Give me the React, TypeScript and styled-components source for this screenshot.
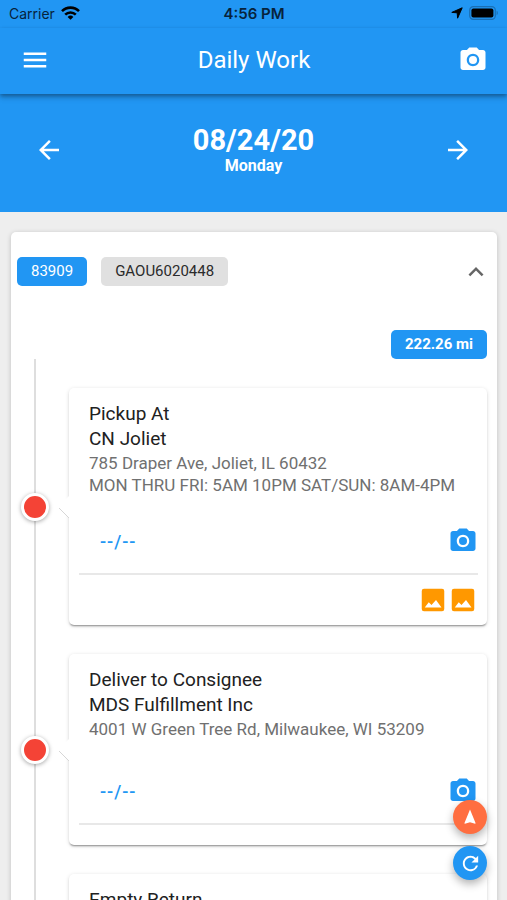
import React from "react";
import styled, { createGlobalStyle } from "styled-components";
import {
  MdArrowBack,
  MdArrowForward,
  MdExpandLess,
  MdMenu,
  MdPhotoCamera,
  MdRefresh,
} from "react-icons/md";

const BLUE = "#2196f3";

const GlobalStyle = createGlobalStyle`
  *, *::before, *::after { box-sizing: border-box; }
  body { margin: 0; background: #eeeeee; font-family: Roboto, sans-serif; }
  button { font: inherit; }
  h1, h2, p, ol { margin: 0; padding: 0; }
`;

const Screen = styled.div`
  display: flex;
  flex-direction: column;
  height: 100vh;
  overflow: hidden;
`;

const StatusBar = styled.div`
  display: grid;
  grid-template-columns: 1fr auto 1fr;
  align-items: center;
  height: 28px;
  padding: 0 8px 2px 9px;
  background: ${BLUE};
  color: #07233c;
  font-family: Inter, sans-serif;
  font-size: 14px;
`;

const StatusGroup = styled.div<{ $end?: boolean }>`
  display: flex;
  align-items: center;
  justify-content: ${(p) => (p.$end ? "flex-end" : "flex-start")};
  gap: 6px;
`;

const Clock = styled.time`
  font-size: 15px;
  font-weight: 600;
`;

const AppBar = styled.header`
  position: relative;
  z-index: 1;
  display: grid;
  grid-template-columns: 1fr auto 1fr;
  align-items: center;
  height: 66px;
  padding: 0 19px 2px 20px;
  flex-shrink: 0;
  background: ${BLUE};
  color: #fff;
  box-shadow: 0 2px 4px rgba(0, 0, 0, 0.3), 0 4px 6px rgba(0, 0, 0, 0.14);
`;

const AppTitle = styled.h1`
  font-size: 24px;
  font-weight: 400;
`;

const IconButton = styled.button<{ $color: string; $end?: boolean }>`
  display: flex;
  padding: 0;
  border: 0;
  background: none;
  color: ${(p) => p.$color};
  font-size: 30px;
  cursor: pointer;
  justify-self: ${(p) => (p.$end ? "end" : "start")};
`;

const Content = styled.main`
  flex: 1;
  overflow-y: auto;
  scrollbar-width: none;
`;

const DayPicker = styled.section`
  display: flex;
  align-items: center;
  justify-content: space-between;
  height: 118px;
  padding: 0 34px 6px;
  background: ${BLUE};
  color: #fff;
`;

const Day = styled.div`
  text-align: center;
  font-weight: 700;
`;

const DayDate = styled.h2`
  font-size: 29px;
  line-height: 31px;
`;

const DayName = styled.p`
  font-size: 16px;
  line-height: 19px;
`;

const Order = styled.section`
  margin: 20px 10px 20px 11px;
  padding: 25px 10px 24px 6px;
  border-radius: 5px;
  background: #fff;
  box-shadow: 0 1px 5px rgba(0, 0, 0, 0.2);
`;

const OrderHead = styled.div`
  display: flex;
  align-items: center;
  gap: 14px;
  height: 29px;
  margin-right: -4px;
`;

const Spacer = styled.span`
  flex: 1;
`;

const Chip = styled.span<{ $tone: "blue" | "grey"; $strong?: boolean }>`
  padding: 0 14px;
  border-radius: 5px;
  background: ${(p) => (p.$tone === "blue" ? BLUE : "#e0e0e0")};
  color: ${(p) => (p.$tone === "blue" ? "#fff" : "#2b2b2b")};
  font-size: 15px;
  font-weight: ${(p) => (p.$strong ? 700 : 400)};
  line-height: 29px;
`;

const Distance = styled.div`
  display: flex;
  justify-content: flex-end;
  margin-top: 44px;
`;

const Timeline = styled.ol`
  display: flex;
  flex-direction: column;
  gap: 29px;
  padding-top: 29px;
  list-style: none;
  background: linear-gradient(#dedede, #dedede) 17px 0 / 2px 100% no-repeat;
`;

const TimelineItem = styled.li`
  display: grid;
  grid-template-columns: 36px 1fr;
  align-items: center;
  column-gap: 16px;
`;

const Dot = styled.span`
  width: 28px;
  height: 28px;
  margin-left: 4px;
  border: 3px solid #fff;
  border-radius: 50%;
  background: #f44336;
  box-shadow: 0 1px 4px rgba(0, 0, 0, 0.35);
`;

const StopCard = styled.article`
  position: relative;
  padding: 13px 9px 0 10px;
  border-radius: 5px;
  background: #fff;
  box-shadow: 0 2px 2px -1px rgba(0, 0, 0, 0.4), 0 1px 4px rgba(0, 0, 0, 0.14);
`;

const Pointer = styled.svg`
  position: absolute;
  top: 50%;
  left: -12px;
  width: 14px;
  height: 28px;
  margin-top: -14px;
`;

const StopInfo = styled.div`
  min-height: 79px;
  padding: 0 10px;
`;

const StopTitle = styled.h2`
  margin-bottom: 1px;
  color: #212121;
  font-size: 19px;
  font-weight: 400;
  line-height: 25px;
`;

const StopNote = styled.p`
  color: #707070;
  font-size: 17px;
  line-height: 22px;
`;

const StopActions = styled.div`
  display: flex;
  align-items: center;
  justify-content: space-between;
  margin-top: 30px;
  padding-bottom: 17px;
  border-bottom: 2px solid #e8e8e8;
`;

const TimeButton = styled.button`
  margin-left: 21px;
  padding: 0;
  border: 0;
  background: none;
  color: ${BLUE};
  font-size: 18px;
  font-weight: 500;
  letter-spacing: 1px;
  cursor: pointer;
`;

const Photos = styled.div`
  display: flex;
  justify-content: flex-end;
  padding: 10px 0;
`;

const FabStack = styled.div`
  position: fixed;
  right: 20px;
  bottom: 20px;
  z-index: 2;
  display: flex;
  flex-direction: column;
  gap: 12px;
`;

const Fab = styled.button<{ $color: string }>`
  display: flex;
  align-items: center;
  justify-content: center;
  width: 34px;
  height: 34px;
  padding: 0;
  border: 0;
  border-radius: 50%;
  background: ${(p) => p.$color};
  color: #fff;
  font-size: 23px;
  box-shadow: 0 4px 8px rgba(0, 0, 0, 0.3);
  cursor: pointer;
`;

const WifiIcon = () => (
  <svg width="19" height="14" viewBox="0 0 19 14" fill="none" stroke="#000" strokeWidth="2.6">
    <path d="M1 5.2a12 12 0 0 1 17 0" />
    <path d="M4.2 8.6a7.6 7.6 0 0 1 10.6 0" />
    <path d="M9.5 13.8 6.6 10.9a4.2 4.2 0 0 1 5.8 0z" fill="#000" stroke="none" />
  </svg>
);

const LocationIcon = () => (
  <svg width="12" height="12" viewBox="0 0 12 12">
    <path d="M11.2.8 6.6 11.2 6.2 5.8.8 5.4z" fill="#000" stroke="#000" strokeLinejoin="round" />
  </svg>
);

const BatteryIcon = () => (
  <svg width="30" height="14" viewBox="0 0 30 14">
    <rect x="0.7" y="0.7" width="25.6" height="12.6" rx="3.6" fill="none" stroke="#1a6fb4" strokeWidth="1.2" />
    <rect x="2.4" y="2.4" width="22" height="9.2" rx="2" fill="#000" />
    <path d="M27.6 4.8c1.6.4 1.6 4 0 4.4z" fill="#1a6fb4" />
  </svg>
);

const PhotoIcon = () => (
  <svg width="1em" height="1em" viewBox="0 0 24 24">
    <rect x="3" y="3" width="18" height="18" rx="1.8" fill="#ff9800" />
    <path d="M5.4 18l3.2-4.2 2.2 2.2 3.6-4 4.4 6z" fill="#fff" />
  </svg>
);

const NavigationIcon = () => (
  <svg width="18" height="18" viewBox="0 0 24 24" fill="currentColor">
    <path d="M12 2 4.5 20.3l.7.7 6.8-2 6.8 2 .7-.7z" />
  </svg>
);

type Stop = { title: string; place?: string; notes: string[]; photos: number };

const stops: Stop[] = [
  {
    title: "Pickup At",
    place: "CN Joliet",
    notes: ["785 Draper Ave, Joliet, IL 60432", "MON THRU FRI: 5AM 10PM SAT/SUN: 8AM-4PM"],
    photos: 2,
  },
  {
    title: "Deliver to Consignee",
    place: "MDS Fulfillment Inc",
    notes: ["4001 W Green Tree Rd, Milwaukee, WI 53209"],
    photos: 0,
  },
  { title: "Empty Return", notes: [], photos: 0 },
];

const StopItem = ({ stop }: { stop: Stop }) => (
  <TimelineItem>
    <Dot />
    <StopCard>
      <Pointer viewBox="0 0 14 28" aria-hidden="true">
        <path d="M14 1 1 14l13 13z" fill="#fff" />
        <path d="M2 15l10 10" stroke="#d6d6d6" fill="none" />
      </Pointer>
      <StopInfo>
        <StopTitle>
          {stop.title}
          {stop.place && <br />}
          {stop.place}
        </StopTitle>
        {stop.notes.map((note) => (
          <StopNote key={note}>{note}</StopNote>
        ))}
      </StopInfo>
      <StopActions>
        <TimeButton>--/--</TimeButton>
        <IconButton $color={BLUE} aria-label={`Take photo for ${stop.title}`}>
          <MdPhotoCamera />
        </IconButton>
      </StopActions>
      <Photos>
        {Array.from({ length: stop.photos }, (_, i) => (
          <IconButton key={i} $color="#ff9800" aria-label={`Photo ${i + 1}`}>
            <PhotoIcon />
          </IconButton>
        ))}
      </Photos>
    </StopCard>
  </TimelineItem>
);

export default function App() {
  return (
    <Screen>
      <GlobalStyle />
      <StatusBar>
        <StatusGroup>
          <span>Carrier</span>
          <WifiIcon />
        </StatusGroup>
        <Clock>4:56 PM</Clock>
        <StatusGroup $end>
          <LocationIcon />
          <BatteryIcon />
        </StatusGroup>
      </StatusBar>
      <AppBar>
        <IconButton $color="#fff" aria-label="Menu">
          <MdMenu />
        </IconButton>
        <AppTitle>Daily Work</AppTitle>
        <IconButton $color="#fff" $end aria-label="Camera">
          <MdPhotoCamera />
        </IconButton>
      </AppBar>
      <Content>
        <DayPicker>
          <IconButton $color="#fff" aria-label="Previous day">
            <MdArrowBack />
          </IconButton>
          <Day>
            <DayDate>08/24/20</DayDate>
            <DayName>Monday</DayName>
          </Day>
          <IconButton $color="#fff" aria-label="Next day">
            <MdArrowForward />
          </IconButton>
        </DayPicker>
        <Order>
          <OrderHead>
            <Chip $tone="blue">83909</Chip>
            <Chip $tone="grey">GAOU6020448</Chip>
            <Spacer />
            <IconButton $color="#666" aria-label="Collapse order">
              <MdExpandLess />
            </IconButton>
          </OrderHead>
          <Distance>
            <Chip $tone="blue" $strong>
              222.26 mi
            </Chip>
          </Distance>
          <Timeline>
            {stops.map((stop) => (
              <StopItem key={stop.title} stop={stop} />
            ))}
          </Timeline>
        </Order>
      </Content>
      <FabStack>
        <Fab $color="#ff6e40" aria-label="Navigate">
          <NavigationIcon />
        </Fab>
        <Fab $color={BLUE} aria-label="Refresh">
          <MdRefresh />
        </Fab>
      </FabStack>
    </Screen>
  );
}
